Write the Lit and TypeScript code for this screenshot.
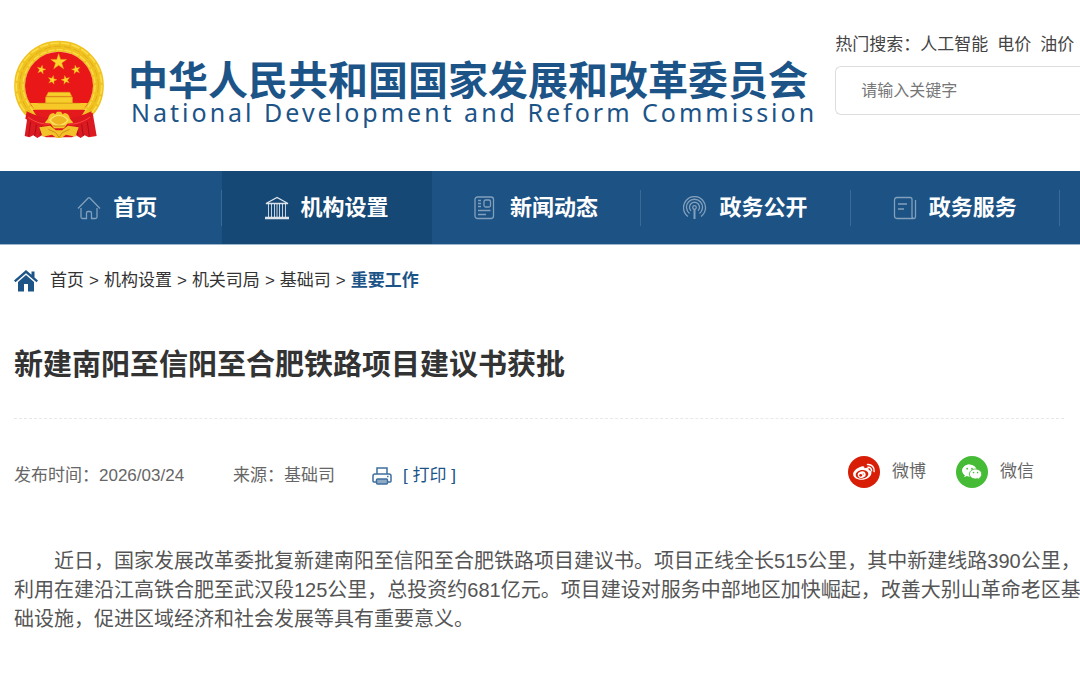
import { LitElement, html, css, svg } from "lit";
import { customElement, property } from "lit/decorators.js";

const STAR = "M0-10 2.3-3.1 9.5-3.1 3.7 1.2 5.9 8.1 0 3.8-5.9 8.1-3.7 1.2-9.5-3.1-2.3-3.1Z";

const star = (x: number, y: number, scale: number, turn = 0) => svg`
  <path d=${STAR} fill="#fbd52c" stroke="#e9a51a" stroke-width=".6"
    transform="translate(${x} ${y}) rotate(${turn}) scale(${scale})" />`;

const icons: Record<string, unknown> = {
  home: svg`<path d="M1 12.5 11.2 2q.8-.8 1.6 0L23 12.5M4 12v9q0 1.500 1.500 1.500h4V17q0-1.500 1.500-1.500h2q1.500 0 1.500 1.500v5.500h4q1.500 0 1.500-1.500v-9" opacity=".45"/>`,
  bank: svg`<path d="M1 7.500 12 1.500 23 7.500ZM0 21.500h24M0 22.500h24" opacity=".85"/><path d="M3.500 8v13M6.500 8v13M9.500 8v13M14.500 8v13M17.500 8v13M20.500 8v13M12 8v13" stroke-width="1" opacity=".75"/>`,
  news: svg`<g opacity=".45"><rect x="1" y="1" width="18.500" height="21.500" rx="2.500"/><rect x="10" y="4" width="6.500" height="7" rx="1.500"/><path d="M4 4.500h3M4 7.500h3M4 10.500h3M4 14.500h12.500M4 18.500h8"/></g>`,
  signal: svg`<g opacity=".45"><path d="M5 20.500a11 11 0 1 1 13 0M6.500 17.500a8 8 0 1 1 10 0M8 14.800a5 5 0 1 1 7 0"/><circle cx="11.500" cy="11.500" r="1.800"/><path d="M11.500 13v10" stroke-width="2"/></g>`,
  book: svg`<path d="M4 1.500h13q2 0 2 2v17q0 2 2 2H4q-2.500 0-2.500-2.500V4q0-2.500 2.500-2.500ZM5 8h9M5 13h6M22.500 4v16.500q0 2-1.500 2" opacity=".45"/>`,
};

@customElement("state-emblem")
class StateEmblem extends LitElement {
  static styles = css`
    :host { display: block; flex: none; }
    svg { display: block; width: 90px; height: 100px; }
  `;

  render() {
    return html`
      <svg viewBox="42 30 270 300" role="img" aria-label="国徽">
        <circle cx="177" cy="167" r="118" fill="none" stroke="#f0c220" stroke-width="33"/>
        <circle cx="177" cy="167" r="128" fill="none" stroke="#fbdc48" stroke-width="5" stroke-dasharray="26 6"/>
        <circle cx="177" cy="167" r="118" fill="none" stroke="#d9a21a" stroke-width="2" stroke-dasharray="22 8"/>
        <circle cx="177" cy="167" r="108" fill="none" stroke="#fbdc48" stroke-width="4" stroke-dasharray="20 5"/>
        <circle cx="177" cy="167" r="102" fill="#ea1719"/>
        <path d="M84 248 74 318l14 4 12-6 12 8 14-8 12 6h78l12-6 14 8 12-8 12 6 24-4-12-70-36 16H120Z" fill="#dc1a22"/>
        <path d="M94 262 86 318M112 264l-8 54M128 274l-8 42M260 262l8 56M242 264l8 54M228 274l6 42" stroke="#a80f18" stroke-width="3" fill="none"/>
        <path d="M90 219h174l-14 20H104Z" fill="#f6c928"/>
        <path d="M145 187h64l6 12H139ZM137 201h80v18h-80Z" fill="#f8ce2b" stroke="#dda51b" stroke-width="2"/>
        <path d="M113 220h128" stroke="#d99d16" stroke-width="2"/>
        <path d="M98 240h158l-20 30H118Z" fill="#e51a1c"/>
        <path d="M80 244q35 18 66 20l12-12 8 3 6-7h10l6 7 8-3 12 12q31-2 66-20l4 22q-35 23-68 24l-12 14h-42l-12-14q-33-1-68-24Z" fill="#dc171d"/>
        <path d="M144 266q4-16 16-17l6 4 5-8h12l5 8 6-4q12 1 16 17l10 12-18 3-10 14h-30l-10-14-18-3Z" fill="#f4c52a"/>
        <path d="M150 270q12-14 27-14t27 14q-12 16-27 16t-27-16Z" fill="#edb522" stroke="#ffe063" stroke-width="4"/>
        <path d="m118 292 32-5 18 14h18l18-14 32 5-10 28-28-6-14 10h-14l-14-10-28 6Z" fill="#f3c22a"/>
        <path d="m145 298 22 10 10 14 10-14 22-10M158 288h38" fill="none" stroke="#cf8e14" stroke-width="3"/>
        <path d="M84 262q34 23 64 20M270 262q-34 23-64 20" stroke="#fb4a43" stroke-width="3" fill="none"/>
        ${star(176, 96, 2.5)}${star(124, 119, 1.4, 12)}${star(228, 119, 1.4, -12)}${star(157, 150, 1.4, 14)}${star(197, 150, 1.4, -14)}
      </svg>`;
  }
}

@customElement("nav-item")
class NavItem extends LitElement {
  @property() icon = "home";
  @property() label = "";
  @property({ type: Boolean, reflect: true }) active = false;

  static styles = css`
    :host { display: flex; align-items: center; }
    :host([active]) { background: #164875; }
    .link { flex: 1; display: flex; align-items: center; justify-content: center; gap: 12px; height: 36px; border-right: 1px solid #3a6a98; color: #fff; font-size: 22px; font-weight: 700; line-height: 36px; text-decoration: none; white-space: nowrap; }
    :host([active]) .link { border-color: transparent; }
    .icon { width: 24px; height: 24px; flex: none; fill: none; stroke: #fff; stroke-width: 1.3; }
  `;

  render() {
    return html`<a class="link" href="#">
      <svg class="icon" viewBox="0 0 24 24" aria-hidden="true">${icons[this.icon]}</svg>
      <span>${this.label}</span></a>`;
  }
}

@customElement("app-root")
class AppRoot extends LitElement {
  static styles = css`
    :host { display: block; min-height: 100vh; overflow-x: hidden; background: #fff; color: #444; font-family: "Liberation Sans", "Noto Sans CJK SC", sans-serif; font-size: 17px; line-height: 26px; }
    a { color: inherit; text-decoration: none; }
    .header { display: flex; padding: 32px 0 31px 14px; }
    .emblem { margin-top: 8px; }
    .brand { flex: none; margin: 26px 0 0 24px; color: #1c5488; white-space: nowrap; }
    .name { margin: 0; font-family: "Noto Sans CJK SC", sans-serif; font-size: 40px; line-height: 40px; font-weight: 700; }
    .english { margin: 2px 0 0 3px; font-family: "Noto Sans", sans-serif; font-size: 25px; line-height: 24px; letter-spacing: 3px; }
    .search { flex: 1; min-width: 0; margin-left: 18px; }
    .hot { display: flex; white-space: nowrap; }
    .hot a + a { margin-left: 9px; }
    .box { box-sizing: border-box; display: block; width: 100%; height: 49px; margin-top: 8px; padding: 0 25px; border: 1px solid #ddd; border-right: 0; border-radius: 6px 0 0 6px; background: #fff; font: inherit; font-size: 16px; outline: 0; }
    .box::placeholder { color: #777; opacity: 1; }
    .nav { display: grid; grid-template-columns: repeat(5, 1fr); height: 74px; padding: 0 20px 0 13px; background: #1c5284; border-bottom: 1px solid #9db6cd; box-sizing: border-box; }
    .main { padding: 0 14px; }
    .crumbs { display: flex; align-items: center; gap: 5px; padding-top: 23px; color: #333; }
    .house { width: 24px; height: 22px; margin-right: 7px; fill: #1c5488; }
    .here { color: #1c5488; font-weight: 700; }
    .title { margin: 50px 0 32px; color: #333; font-size: 29px; line-height: 42px; font-weight: 700; }
    .meta { display: flex; justify-content: space-between; margin-right: 2px; padding-top: 36px; border-top: 1px dashed #e8e8e8; color: #666; white-space: nowrap; }
    .info { display: flex; align-items: center; padding-top: 8px; }
    .source { margin-left: 49px; }
    .print { display: flex; align-items: center; gap: 11px; margin-left: 37px; padding: 0; border: 0; background: none; color: #1c5488; font: inherit; cursor: pointer; }
    .printer { width: 20px; height: 20px; fill: none; stroke: #3f6f9d; stroke-width: 1.5; }
    .share { display: flex; gap: 30px; margin-right: 30px; }
    .social { display: flex; align-items: center; gap: 12px; }
    .badge { width: 32px; height: 32px; }
    .body { margin: 58px 0 0; color: #555; font-size: 20px; line-height: 29px; text-indent: 2em; white-space: nowrap; }
  `;

  render() {
    return html`
      <header class="header">
        <state-emblem class="emblem"></state-emblem>
        <div class="brand">
          <h1 class="name">中华人民共和国国家发展和改革委员会</h1>
          <p class="english">National Development and Reform Commission</p>
        </div>
        <form class="search" role="search">
          <div class="hot"><label for="keyword">热门搜索：</label><a href="#">人工智能</a><a href="#">电价</a><a href="#">油价</a></div>
          <input class="box" id="keyword" type="text" placeholder="请输入关键字">
        </form>
      </header>
      <nav class="nav">
        <nav-item icon="home" label="首页"></nav-item>
        <nav-item icon="bank" label="机构设置" active></nav-item>
        <nav-item icon="news" label="新闻动态"></nav-item>
        <nav-item icon="signal" label="政务公开"></nav-item>
        <nav-item icon="book" label="政务服务"></nav-item>
      </nav>
      <main class="main">
        <div class="crumbs">
          <svg class="house" viewBox="0 0 24 22" aria-hidden="true"><path d="M12 0 0 10.500 1.500 12.300 12 3.300 22.500 12.300 24 10.500 20.500 7.400V1.500h-3v3.300ZM12 5 4 12v9.500h6V14h4v7.500h6V12Z"/></svg>
          <a href="#">首页</a><span>&gt;</span><a href="#">机构设置</a><span>&gt;</span><a href="#">机关司局</a><span>&gt;</span><a href="#">基础司</a><span>&gt;</span><a class="here" href="#">重要工作</a>
        </div>
        <h2 class="title">新建南阳至信阳至合肥铁路项目建议书获批</h2>
        <div class="meta">
          <div class="info">
            <span>发布时间：2026/03/24</span>
            <span class="source">来源：基础司</span>
            <button class="print" type="button">
              <svg class="printer" viewBox="0 0 20 20" aria-hidden="true"><path d="M5 8V2h10v6M4 16H1.800Q1 16 1 15V10q0-2 2-2h14q2 0 2 2v5q0 1-.8 1H16"/><rect x="4.500" y="13" width="11" height="5" rx="1" fill="#8faac4"/><path d="M15 10.500h1.500"/></svg>
              <span>[ 打印 ]</span>
            </button>
          </div>
          <div class="share">
            <a class="social" href="#">
              <svg class="badge" viewBox="0 0 32 32" aria-hidden="true">
                <circle cx="16" cy="16" r="16" fill="#d81e06"/>
                <path d="M13.500 10.500c1.800-.8 3.300-.3 2.900 1.800 2.500-1 5-.7 4.300 1.700 2 .6 3 1.800 2.700 3.500-.6 3.700-5 6.300-9.800 6.300-5 0-8.500-2.500-8.500-5.800 0-2.800 4.300-6.400 8.400-7.500Z" fill="#fff"/>
                <ellipse cx="14" cy="18.300" rx="6.400" ry="4.300" fill="#d81e06" transform="rotate(-8 14 18.300)"/>
                <ellipse cx="13.700" cy="18.600" rx="4" ry="3.300" fill="#fff" transform="rotate(-15 13.700 18.600)"/>
                <circle cx="12.700" cy="19.300" r="1.400" fill="#d81e06"/><circle cx="15.200" cy="18" r=".6" fill="#d81e06"/>
                <path d="M19.500 8.500a6 6 0 0 1 6.600 7M20 11.200a3.200 3.200 0 0 1 3.500 3.600" fill="none" stroke="#fff" stroke-width="1.500" stroke-linecap="round"/>
              </svg><span>微博</span></a>
            <a class="social" href="#">
              <svg class="badge" viewBox="0 0 32 32" aria-hidden="true">
                <circle cx="16" cy="16" r="16" fill="#46bb36"/>
                <path d="M13.500 8.500c-4.100 0-7.300 2.700-7.300 6 0 1.900 1 3.500 2.700 4.600l-.7 2.200 2.600-1.300c1 .3 1.900.4 3 .4Z" fill="#fff"/>
                <ellipse cx="13.500" cy="14.500" rx="7.200" ry="6" fill="#fff"/>
                <path d="M19.500 13c3.500 0 6.200 2.200 6.200 5.100 0 1.600-.8 3-2.200 3.900l.5 1.800-2.100-1.100c-.8.2-1.500.3-2.400.3-3.400 0-6.100-2.200-6.100-4.900s2.700-5.100 6.100-5.100Z" fill="#fff" stroke="#46bb36" stroke-width=".9"/>
                <g fill="#46bb36"><circle cx="11.200" cy="12.700" r=".9"/><circle cx="16" cy="12.700" r=".9"/><circle cx="17.500" cy="16.600" r=".8"/><circle cx="21.600" cy="16.600" r=".8"/></g>
              </svg><span>微信</span></a>
          </div>
        </div>
        <p class="body">近日，国家发展改革委批复新建南阳至信阳至合肥铁路项目建议书。项目正线全长515公里，其中新建线路390公里，<br>利用在建沿江高铁合肥至武汉段125公里，总投资约681亿元。项目建设对服务中部地区加快崛起，改善大别山革命老区基<br>础设施，促进区域经济和社会发展等具有重要意义。</p>
      </main>`;
  }
}
